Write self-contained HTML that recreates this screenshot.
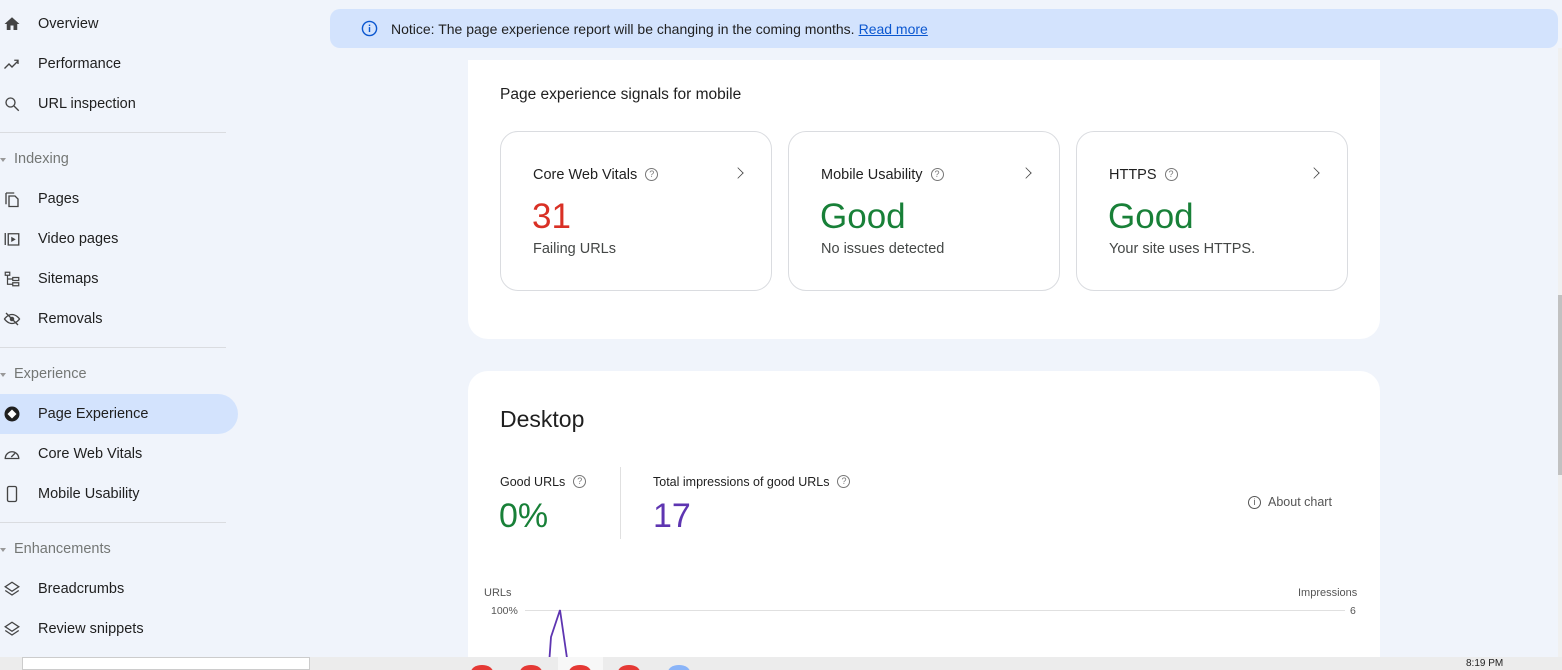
<!DOCTYPE html>
<html style="overflow:hidden;width:1562px;height:670px"><head><meta charset="utf-8"><style>
*{box-sizing:border-box;margin:0;padding:0}
body{width:1562px;height:670px;overflow:hidden;background:#f0f4fb;font-family:"Liberation Sans",sans-serif;color:#1f1f1f;position:relative}
.nav{position:absolute;left:0;top:0;width:240px}
.item{position:absolute;left:0;height:40px;width:238px;display:flex;align-items:center;font-size:14.5px;color:#1f1f1f}
.item svg{position:absolute;left:3px;width:18px;height:18px}
.item span{position:absolute;left:38px}
.sec{position:absolute;left:14px;font-size:14.5px;color:#747775}
.sec:before{content:"";position:absolute;left:-14px;top:7px;border-left:3px solid transparent;border-right:3px solid transparent;border-top:4px solid #999}
.hr{position:absolute;left:0;width:226px;height:1px;background:#dadce0}
.act{background:#d3e3fd;border-radius:0 20px 20px 0}
.notice{position:absolute;left:330px;top:9px;width:1228px;height:39px;background:#d3e3fd;border-radius:10px;font-size:14px;color:#1f1f1f;display:flex;align-items:center}
.notice a{color:#0b57d0;text-decoration:underline;margin-left:4px}
.card{position:absolute;left:468px;width:912px;background:#fff;border-radius:20px}
.box{position:absolute;top:131px;width:272px;height:160px;border:1px solid #dadce0;border-radius:18px}
.box .t{position:absolute;left:32px;top:35px;font-size:14.5px;color:#1f1f1f}
.box .chev{position:absolute;right:28px;top:36px;width:10px;height:10px;border-right:1.6px solid #444;border-top:1.6px solid #444;transform:rotate(45deg) scale(.8)}
.box .big{position:absolute;left:31px;top:65px;font-size:35px}
.box .sub{position:absolute;left:32px;top:109px;font-size:14.5px;color:#444746}
.q{display:inline-block;width:13px;height:13px;border:1.3px solid #777;border-radius:50%;font-size:9px;text-align:center;line-height:11px;color:#777;margin-left:8px;vertical-align:2px}
.task{position:absolute;left:0;top:657px;width:1562px;height:13px;background:#ececec;overflow:hidden}
.dot{position:absolute;top:8px;width:22px;height:14px;border-radius:50%;background:#e53935}
</style></head><body>
<div class="nav">
<div class="item" style="top:4px"><svg viewBox="0 0 24 24"><path d="M10 20v-6h4v6h5v-8h3L12 3 2 12h3v8z" fill="#444"/></svg><span>Overview</span></div>
<div class="item" style="top:44px"><svg viewBox="0 0 24 24"><path d="M2 18l6-6 4 4 8-8M15 7h5v5" fill="none" stroke="#444" stroke-width="1.8"/></svg><span>Performance</span></div>
<div class="item" style="top:84px"><svg viewBox="0 0 24 24"><circle cx="10" cy="10" r="6" fill="none" stroke="#444" stroke-width="1.8"/><path d="M14.5 14.5L21 21" stroke="#444" stroke-width="1.8"/></svg><span>URL inspection</span></div>
<div class="hr" style="top:132px"></div>
<div class="sec" style="top:151px">Indexing</div>
<div class="item" style="top:179px"><svg viewBox="0 0 24 24"><path d="M4 4v15M4 4h11M8 8h8l4 4v10H8z" fill="none" stroke="#444" stroke-width="1.8"/></svg><span>Pages</span></div>
<div class="item" style="top:219px"><svg viewBox="0 0 24 24"><path d="M3 4v16M7 5h14v15H7z" fill="none" stroke="#444" stroke-width="1.8"/><path d="M11 9l6 3.5-6 3.5z" fill="#444"/></svg><span>Video pages</span></div>
<div class="item" style="top:259px"><svg viewBox="0 0 24 24"><path d="M3 3h6v4H3zM13 10h8v4h-8zM13 17h8v4h-8zM6 7v12h7M6 12h7" fill="none" stroke="#444" stroke-width="1.6"/></svg><span>Sitemaps</span></div>
<div class="item" style="top:299px"><svg viewBox="0 0 24 24"><path d="M2 12s4-6 10-6 10 6 10 6-4 6-10 6S2 12 2 12z" fill="none" stroke="#444" stroke-width="1.8"/><circle cx="12" cy="12" r="3" fill="#444"/><path d="M4 4l16 16" stroke="#444" stroke-width="1.8"/></svg><span>Removals</span></div>
<div class="hr" style="top:347px"></div>
<div class="sec" style="top:366px">Experience</div>
<div class="item act" style="top:394px"><svg viewBox="0 0 24 24"><circle cx="12" cy="12" r="10" fill="#1f1f1f"/><path d="M12 6l6 6-6 6-6-6z" fill="#fff"/></svg><span>Page Experience</span></div>
<div class="item" style="top:434px"><svg viewBox="0 0 24 24"><path d="M3 18a9 9 0 1 1 18 0z" fill="none" stroke="#444" stroke-width="1.8"/><path d="M11 16l5-5" stroke="#444" stroke-width="1.8"/></svg><span>Core Web Vitals</span></div>
<div class="item" style="top:474px"><svg viewBox="0 0 24 24"><rect x="6" y="2" width="12" height="20" rx="2" fill="none" stroke="#444" stroke-width="1.8"/></svg><span>Mobile Usability</span></div>
<div class="hr" style="top:522px"></div>
<div class="sec" style="top:541px">Enhancements</div>
<div class="item" style="top:569px"><svg viewBox="0 0 24 24"><path d="M12 3l9 6-9 6-9-6zM3 14l9 6 9-6" fill="none" stroke="#444" stroke-width="1.8"/></svg><span>Breadcrumbs</span></div>
<div class="item" style="top:609px"><svg viewBox="0 0 24 24"><path d="M12 3l9 6-9 6-9-6zM3 14l9 6 9-6" fill="none" stroke="#444" stroke-width="1.8"/></svg><span>Review snippets</span></div>
</div>

<div class="notice"><svg style="margin:0 13px 0 31px" width="17" height="17" viewBox="0 0 24 24"><circle cx="12" cy="12" r="10" fill="none" stroke="#0b57d0" stroke-width="2"/><rect x="11" y="10" width="2" height="7" fill="#0b57d0"/><rect x="11" y="6.5" width="2" height="2" fill="#0b57d0"/></svg>Notice: The page experience report will be changing in the coming months.<a>Read more</a></div>

<div class="card" style="top:60px;height:279px;border-radius:0 0 20px 20px"></div>
<div style="position:absolute;left:500px;top:86px;font-size:15.5px;color:#1f1f1f">Page experience signals for mobile</div>
<div class="box" style="left:500px"><div class="t">Core Web Vitals<span class="q">?</span></div><div class="chev"></div><div class="big" style="color:#d93025">31</div><div class="sub">Failing URLs</div></div>
<div class="box" style="left:788px"><div class="t">Mobile Usability<span class="q">?</span></div><div class="chev"></div><div class="big" style="color:#188038">Good</div><div class="sub">No issues detected</div></div>
<div class="box" style="left:1076px"><div class="t">HTTPS<span class="q">?</span></div><div class="chev"></div><div class="big" style="color:#188038">Good</div><div class="sub">Your site uses HTTPS.</div></div>

<div class="card" style="top:371px;height:286px;border-radius:20px 20px 0 0"></div>
<div style="position:absolute;left:500px;top:406px;font-size:23px;color:#1f1f1f">Desktop</div>
<div style="position:absolute;left:500px;top:475px;font-size:12.5px">Good URLs<span class="q">?</span></div>
<div style="position:absolute;left:499px;top:497px;font-size:34px;color:#188038">0%</div>
<div style="position:absolute;left:620px;top:467px;width:1px;height:72px;background:#e0e0e0"></div>
<div style="position:absolute;left:653px;top:475px;font-size:12.5px">Total impressions of good URLs<span class="q">?</span></div>
<div style="position:absolute;left:653px;top:497px;font-size:34px;color:#5e35b1">17</div>
<div style="position:absolute;left:1248px;top:495px;font-size:12.5px;color:#555;display:flex;align-items:center"><span class="q" style="margin:0 7px 0 0;border-color:#555;color:#555;vertical-align:0">i</span>About chart</div>
<div style="position:absolute;left:484px;top:587px;font-size:11px;color:#555">URLs</div>
<div style="position:absolute;left:491px;top:605px;font-size:10.5px;color:#555">100%</div>
<div style="position:absolute;left:1298px;top:587px;font-size:11px;color:#555">Impressions</div>
<div style="position:absolute;left:1350px;top:605px;font-size:10.5px;color:#555">6</div>
<div style="position:absolute;left:525px;top:610px;width:820px;height:1px;background:#e0e0e0"></div>
<svg style="position:absolute;left:540px;top:605px" width="40" height="52"><path d="M9 60L11 32L20 5L28 60" fill="none" stroke="#5e35b1" stroke-width="1.8"/></svg>

<div style="position:absolute;left:1558px;top:48px;width:4px;height:609px;background:#f0f0f0"></div>
<div style="position:absolute;left:1558px;top:295px;width:4px;height:180px;background:#c1c1c1"></div>

<div class="task">
<div style="position:absolute;left:22px;top:0;width:288px;height:13px;background:#fff;border:1px solid #ccc"></div>
<div class="dot" style="left:471px"></div><div class="dot" style="left:520px"></div><div style="position:absolute;left:558px;top:0;width:45px;height:13px;background:#f7f7f7"></div><div class="dot" style="left:569px"></div><div class="dot" style="left:618px"></div>
<div class="dot" style="left:668px;background:#8ab4f8"></div>
<div style="position:absolute;left:1466px;top:1px;font-size:10px;color:#222">8:19 PM</div>
</div>
</body></html>
